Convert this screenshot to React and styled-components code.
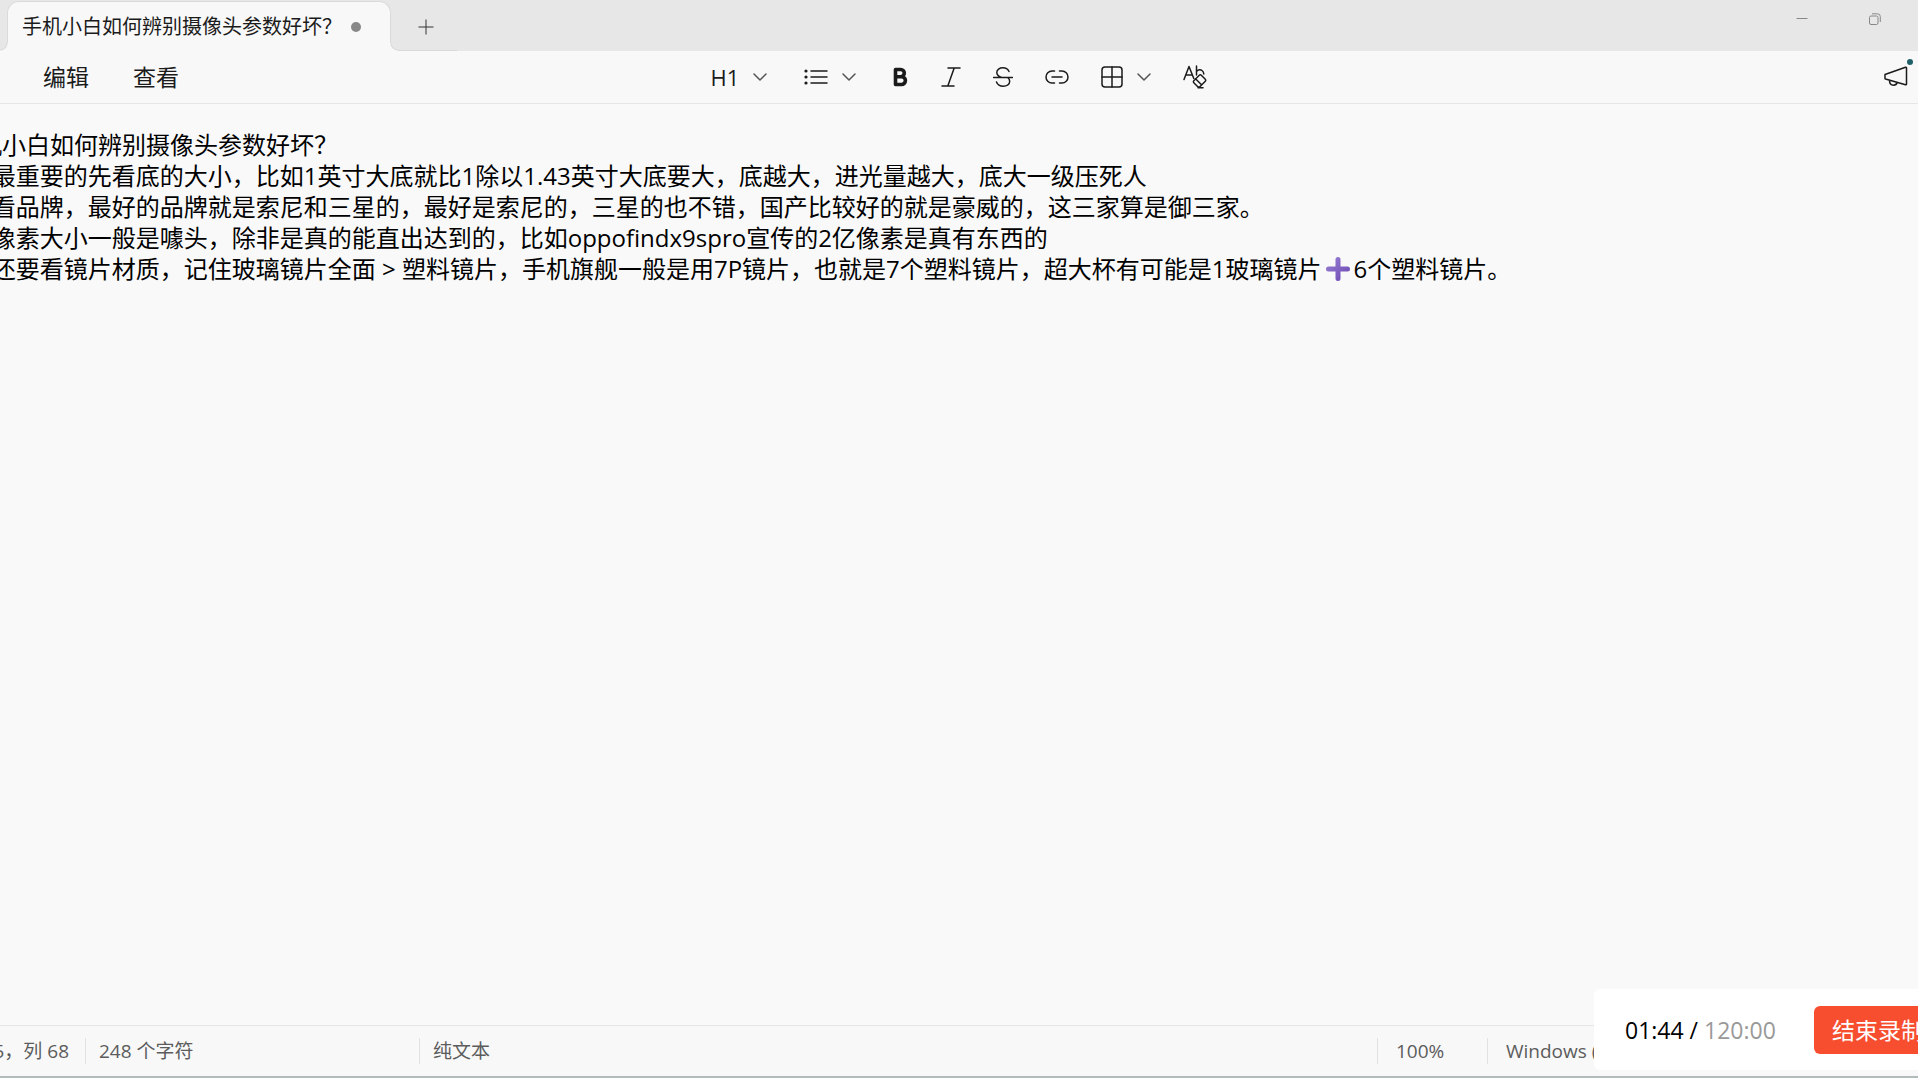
import styled, { createGlobalStyle } from "styled-components";

const App = () => {
  return (
    <>
      <GlobalStyle />
      <Window>
        <TitleBar>
          <Tabs>
            <Tab>
              <TabTitle>手机小白如何辨别摄像头参数好坏？</TabTitle>
              <UnsavedDot />
            </Tab>
            <NewTab aria-label="新建标签页">
              <svg width="16" height="16" viewBox="0 0 16 16">
                <path d="M8 .5v15M.5 8h15" />
              </svg>
            </NewTab>
          </Tabs>
          <CaptionButtons>
            <CaptionButton aria-label="最小化">
              <svg width="12" height="12" viewBox="0 0 12 12">
                <path d="M.5 5.5h11" />
              </svg>
            </CaptionButton>
            <CaptionButton aria-label="还原">
              <svg width="12" height="12" viewBox="0 0 12 12">
                <rect x=".5" y="3" width="8.5" height="8.5" rx="1.5" />
                <path d="M3 .8h5.5a2.8 2.8 0 0 1 2.8 2.8V9" />
              </svg>
            </CaptionButton>
          </CaptionButtons>
        </TitleBar>

        <Toolbar>
          <Menu>
            <MenuButton>编辑</MenuButton>
            <MenuButton>查看</MenuButton>
          </Menu>
          <Tools>
            <ToolButton aria-label="标题">
              <span>H1</span>
              <Chevron />
            </ToolButton>
            <ToolButton aria-label="列表">
              <ListIcon />
              <Chevron />
            </ToolButton>
            <IconGroup>
              <ToolButton aria-label="加粗">
                <BoldIcon />
              </ToolButton>
              <ToolButton aria-label="斜体">
                <ItalicIcon />
              </ToolButton>
              <ToolButton aria-label="删除线">
                <StrikeIcon />
              </ToolButton>
              <ToolButton aria-label="链接">
                <LinkIcon />
              </ToolButton>
              <ToolButton aria-label="表格">
                <TableIcon />
                <Chevron />
              </ToolButton>
              <ToolButton aria-label="清除格式">
                <ClearIcon />
              </ToolButton>
            </IconGroup>
          </Tools>
          <News>
            <NewsButton aria-label="新增功能">
              <MegaphoneIcon />
              <NewsDot />
            </NewsButton>
          </News>
        </Toolbar>

        <Editor
          role="textbox"
          aria-multiline="true"
          aria-label="文本编辑器"
          contentEditable
          suppressContentEditableWarning
          spellCheck={false}
        >
          <Line>手机小白如何辨别摄像头参数好坏？</Line>
          <Line>1、最重要的先看底的大小，比如1英寸大底就比1除以1.43英寸大底要大，底越大，进光量越大，底大一级压死人</Line>
          <Line>2、看品牌，最好的品牌就是索尼和三星的，最好是索尼的，三星的也不错，国产比较好的就是豪威的，这三家算是御三家。</Line>
          <Line>3、像素大小一般是噱头，除非是真的能直出达到的，比如oppofindx9spro宣传的2亿像素是真有东西的</Line>
          <Line>
            4、还要看镜片材质，记住玻璃镜片全面 &gt; 塑料镜片，手机旗舰一般是用7P镜片，也就是7个塑料镜片，超大杯有可能是1玻璃镜片
            <PlusEmoji />
            6个塑料镜片。
          </Line>
        </Editor>

        <StatusBar>
          <Position>行 5，列 68</Position>
          <Count>248 个字符</Count>
          <Format>纯文本</Format>
          <Zoom>100%</Zoom>
          <LineEnding>Windows (CRLF)</LineEnding>
        </StatusBar>

        <Recorder>
          <Time>
            01:44 / <Limit>120:00</Limit>
          </Time>
          <StopButton>结束录制</StopButton>
        </Recorder>
      </Window>
    </>
  );
};

export default App;

// Icons
const Chevron = () => (
  <ChevronSvg width="14" height="8" viewBox="0 0 14 8">
    <path d="M1 1l6 6 6-6" />
  </ChevronSvg>
);

const ListIcon = () => (
  <svg width="24" height="16" viewBox="0 0 24 16">
    <path d="M7 2h16M7 8h16M7 14h16" />
    <g fill="#1b1b1b" stroke="none">
      <circle cx="2" cy="2" r="1.6" />
      <circle cx="2" cy="8" r="1.6" />
      <circle cx="2" cy="14" r="1.6" />
    </g>
  </svg>
);

const BoldIcon = () => (
  <svg width="16" height="20" viewBox="0 0 16 20">
    <path
      d="M2.5 2.5h5.2a3.6 3.6 0 0 1 0 7.2H2.5zM2.5 9.7h6a3.9 3.9 0 0 1 0 7.8h-6z"
      strokeWidth="3.6"
    />
  </svg>
);

const ItalicIcon = () => (
  <svg width="20" height="20" viewBox="0 0 20 20">
    <path d="M7 1h12M1 19h12M13.2 1L6.8 19" />
  </svg>
);

const StrikeIcon = () => (
  <svg width="20" height="20" viewBox="0 0 20 20">
    <path d="M.5 10.5h19M16 4.5C14.8 2 12.5 .8 9.9 .8 6.500 .8 3.8 2.7 3.8 5.5c0 2.400 1.700 4 5 5M3.500 15c1 2.600 3.400 4.200 6.700 4.200 3.700 0 6.500-1.900 6.500-4.900 0-1.600-.7-2.800-2-3.800" />
  </svg>
);

const LinkIcon = () => (
  <svg width="24" height="14" viewBox="0 0 24 14">
    <path d="M9.500 1H7a6 6 0 0 0 0 12h2.500M14.500 1H17a6 6 0 0 1 0 12h-2.500M7 7h10" />
  </svg>
);

const TableIcon = () => (
  <svg width="22" height="22" viewBox="0 0 22 22">
    <rect x="1" y="1" width="20" height="20" rx="3" />
    <path d="M11 1v20M1 11h20" />
  </svg>
);

const ClearIcon = () => (
  <svg width="24" height="24" viewBox="0 0 24 24">
    <path d="M1 14.500L6 1.500l4.800 12M2.800 10h6.500M13.500 1v9M13.500 6.500c1.500-2 4-2.200 5.500-1 1.200.9 1.700 2 1.800 3.500" />
    <path d="M16.300 10.200a1.400 1.400 0 0 1 2 0l4 4a1.400 1.400 0 0 1 0 2l-5.500 5.500a1.400 1.400 0 0 1-2 0l-4-4a1.400 1.400 0 0 1 0-2zM12.500 13.800l6 6M15 22.800h5" />
  </svg>
);

const MegaphoneIcon = () => (
  <svg width="24" height="22" viewBox="0 0 24 22">
    <path d="M1 8.500L21.500 1.200a.8.8 0 0 1 1 .8v16a.8.8 0 0 1-1 .8L1.500 13a.8.8 0 0 1-.5-.8zM5.500 14.500c0 3 1.700 4.700 4 4.700 1.800 0 3.200-1 3.600-2.700" />
  </svg>
);

const PlusEmoji = () => (
  <EmojiSvg width="32" height="24" viewBox="0 0 32 24" role="img" aria-label="➕">
    <defs>
      <linearGradient id="plus" x1="0" y1="0" x2="1" y2="1">
        <stop offset="0" stopColor="#9a83d6" />
        <stop offset="1" stopColor="#6a45b0" />
      </linearGradient>
    </defs>
    <path
      d="M16 0a2.500 2.500 0 0 1 2.500 2.500v7h7a2.500 2.500 0 0 1 0 5h-7v7a2.500 2.500 0 0 1-5 0v-7h-7a2.500 2.500 0 0 1 0-5h7v-7A2.500 2.500 0 0 1 16 0z"
      fill="url(#plus)"
    />
  </EmojiSvg>
);

// Styled Components
const GlobalStyle = createGlobalStyle`
  * {
    box-sizing: border-box;
  }
  body {
    margin: 0;
    overflow: hidden;
    font-family: "Open Sans", "Noto Sans CJK SC", sans-serif;
    color: #1b1b1b;
  }
  button {
    border: none;
    padding: 0;
    background: none;
    color: inherit;
    font-family: inherit;
    cursor: pointer;
  }
`;

const Window = styled.div`
  position: relative;
  display: flex;
  flex-direction: column;
  height: 100vh;
  overflow: hidden;
  background: #f9f9f9;
  border-bottom: 2px solid #b2babb;
`;

const TitleBar = styled.header`
  display: flex;
  justify-content: space-between;
  height: 51px;
  flex-shrink: 0;
  background: #e7e7e7;
`;

const Tabs = styled.div`
  display: flex;
  padding: 1px 0 0 7px;
`;

const Tab = styled.div`
  position: relative;
  display: flex;
  align-items: center;
  justify-content: space-between;
  width: 384px;
  padding: 0 29px 0 14px;
  background: #f8f8f8;
  border: 1px solid #dadada;
  border-bottom: none;
  border-radius: 12px 12px 0 0;

  /* outward curves at the foot of the tab */
  &::before,
  &::after {
    content: "";
    position: absolute;
    bottom: 0;
    width: 8px;
    height: 8px;
  }
  &::before {
    right: 100%;
    background: radial-gradient(circle at 0 0, #e7e7e7 6px, #dadada 7px, #f8f8f8 8px);
  }
  &::after {
    left: 100%;
    background: radial-gradient(circle at 100% 0, #e7e7e7 6px, #dadada 7px, #f8f8f8 8px);
  }
`;

/* the full-width question mark leaves blank space before the dot */
const TabTitle = styled.span`
  width: 320px;
  font-size: 20px;
  line-height: 28px;
  white-space: nowrap;
`;

const UnsavedDot = styled.span`
  width: 10px;
  height: 10px;
  flex-shrink: 0;
  border-radius: 50%;
  background: #888;
`;

const NewTab = styled.button`
  display: flex;
  align-items: center;
  justify-content: center;
  width: 66px;
  padding: 2px 0 0 4px;
  border-bottom: 1px solid #d8d8d8;

  svg {
    fill: none;
    stroke: #333;
  }
`;

const CaptionButtons = styled.div`
  display: flex;
  height: 37px;
  padding-right: 7px;
`;

const CaptionButton = styled.button`
  display: flex;
  align-items: center;
  justify-content: center;
  width: 73px;

  svg {
    fill: none;
    stroke: #888;
  }
`;

const Toolbar = styled.nav`
  display: grid;
  grid-template-columns: 1fr auto 1fr;
  align-items: center;
  height: 53px;
  flex-shrink: 0;
  background: #f8f8f8;
  border-bottom: 1px solid #e6e6e6;

  svg {
    display: block;
    fill: none;
    stroke: #1b1b1b;
    stroke-width: 1.5;
    stroke-linecap: round;
    stroke-linejoin: round;
  }
`;

const Menu = styled.div`
  display: flex;
  gap: 44px;
  padding-left: 43px;
`;

const MenuButton = styled.button`
  font-size: 23px;
  line-height: 32px;
`;

const Tools = styled.div`
  display: flex;
  align-items: center;
  gap: 37px;
`;

const IconGroup = styled.div`
  display: flex;
  align-items: center;
  gap: 32px;
`;

const ToolButton = styled.button`
  display: flex;
  align-items: center;
  gap: 14px;
  font-size: 22px;
  line-height: 30px;
`;

const ChevronSvg = styled.svg`
  && {
    stroke: #555;
  }
`;

const News = styled.div`
  display: flex;
  justify-content: flex-end;
  padding-right: 10px;
`;

const NewsButton = styled.button`
  position: relative;
`;

const NewsDot = styled.span`
  position: absolute;
  top: -7px;
  right: -5px;
  width: 6px;
  height: 6px;
  border-radius: 50%;
  background: #1f6068;
`;

const Editor = styled.main`
  flex: 1;
  margin-left: -46px;
  padding-top: 25px;
  background: #f9f9f9;
  color: #000;
  font-size: 24px;
  line-height: 31px;
  white-space: nowrap;
  outline: none;
`;

const Line = styled.p`
  margin: 0;
  height: 31px;
`;

const EmojiSvg = styled.svg`
  vertical-align: -3px;
`;

const StatusBar = styled.footer`
  display: flex;
  align-items: center;
  height: 51px;
  flex-shrink: 0;
  margin-left: -32px;
  background: #f8f8f8;
  border-top: 1px solid #e6e6e6;
  color: #5c5c5c;
  font-size: 19px;
  line-height: 26px;
  white-space: nowrap;
`;

const Position = styled.span`
  width: 117px;
  text-align: right;
  padding-right: 16px;
`;

const StatusItem = styled.span`
  border-left: 1px solid #e2e2e2;
  padding-left: 13px;
`;

const Count = styled(StatusItem)`
  width: 334px;
`;

const Format = styled(StatusItem)`
  flex: 1;
`;

const Zoom = styled(StatusItem)`
  width: 110px;
  padding-left: 18px;
`;

const LineEnding = styled(StatusItem)`
  width: 431px;
  padding-left: 18px;
`;

const Recorder = styled.aside`
  position: absolute;
  right: -24px;
  bottom: 6px;
  display: flex;
  align-items: center;
  justify-content: space-between;
  width: 348px;
  height: 81px;
  padding-left: 31px;
  border-radius: 6px 0 0 6px;
  background: #fff;
`;

const Time = styled.span`
  color: #000;
  font-size: 23px;
  line-height: 32px;
`;

const Limit = styled.span`
  color: #999;
`;

const StopButton = styled.button`
  width: 128px;
  height: 48px;
  border-radius: 6px;
  background: #f74e30;
  font-size: 23px;
  line-height: 32px;

  && {
    color: #fff;
  }
`;
